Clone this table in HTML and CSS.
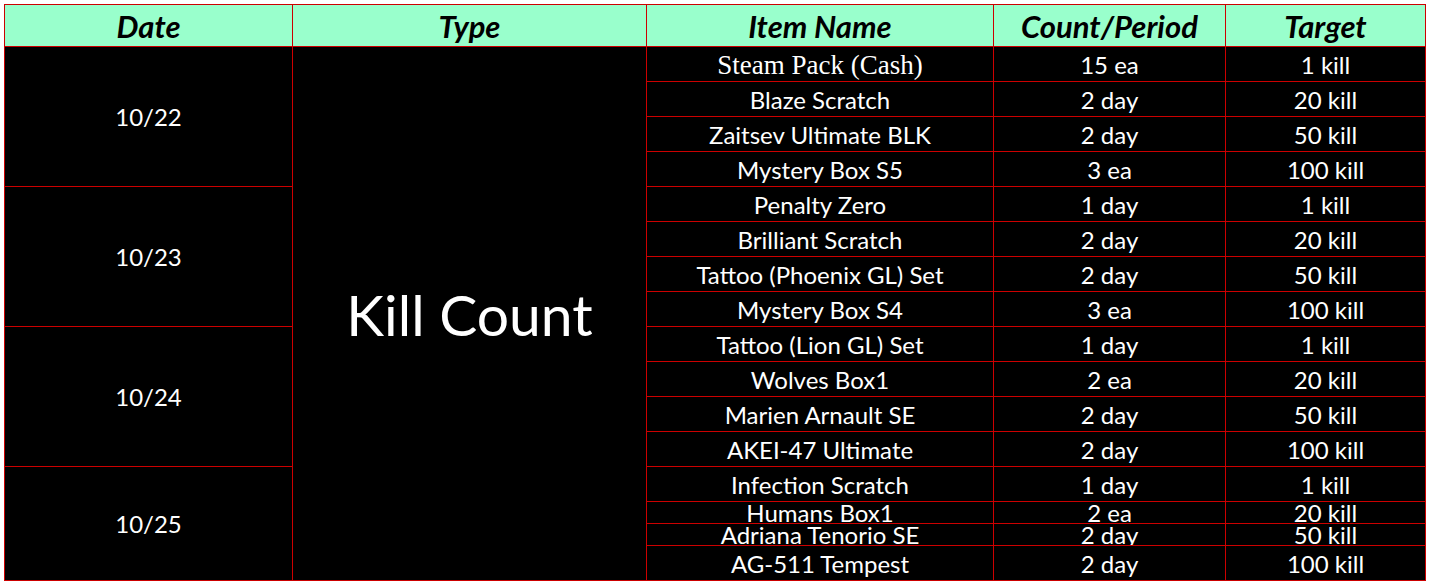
FILE: index.html
```html
<!DOCTYPE html>
<html>
<head>
<meta charset="utf-8">
<link rel="stylesheet" href="styles.css">
</head>
<body>
<div class="sheet">
  <div class="hd">Date</div>
  <div class="hd">Type</div>
  <div class="hd">Item Name</div>
  <div class="hd">Count/Period</div>
  <div class="hd">Target</div>

  <div class="c date span4">10/22</div>
  <div class="c type">Kill Count</div>
  <div class="c serif">Steam Pack (Cash)</div><div class="c">15 ea</div><div class="c">1 kill</div>
  <div class="c">Blaze Scratch</div><div class="c">2 day</div><div class="c">20 kill</div>
  <div class="c">Zaitsev Ultimate BLK</div><div class="c">2 day</div><div class="c">50 kill</div>
  <div class="c">Mystery Box S5</div><div class="c">3 ea</div><div class="c">100 kill</div>

  <div class="c date span4">10/23</div>
  <div class="c">Penalty Zero</div><div class="c">1 day</div><div class="c">1 kill</div>
  <div class="c">Brilliant Scratch</div><div class="c">2 day</div><div class="c">20 kill</div>
  <div class="c">Tattoo (Phoenix GL) Set</div><div class="c">2 day</div><div class="c">50 kill</div>
  <div class="c">Mystery Box S4</div><div class="c">3 ea</div><div class="c">100 kill</div>

  <div class="c date span4">10/24</div>
  <div class="c">Tattoo (Lion GL) Set</div><div class="c">1 day</div><div class="c">1 kill</div>
  <div class="c">Wolves Box1</div><div class="c">2 ea</div><div class="c">20 kill</div>
  <div class="c">Marien Arnault SE</div><div class="c">2 day</div><div class="c">50 kill</div>
  <div class="c">AKEI-47 Ultimate</div><div class="c">2 day</div><div class="c">100 kill</div>

  <div class="c date span4">10/25</div>
  <div class="c">Infection Scratch</div><div class="c">1 day</div><div class="c">1 kill</div>
  <div class="c tight">Humans Box1</div><div class="c tight">2 ea</div><div class="c tight">20 kill</div>
  <div class="c tight">Adriana Tenorio SE</div><div class="c tight">2 day</div><div class="c tight">50 kill</div>
  <div class="c">AG-511 Tempest</div><div class="c">2 day</div><div class="c">100 kill</div>
</div>
</body>
</html>
```
FILE: styles.css
```css
html, body {
  margin: 0;
  background: #ffffff;
}
body {
  padding: 4px;
}
.sheet {
  display: grid;
  grid-template-columns: 287px 353px 346px 231px 199px;
  grid-template-rows: 41px repeat(12, 34px) 34px 21px 21px 34px;
  gap: 1px;
  padding: 1px;
  background: #cc0000;
  width: max-content;
  font-family: Lato, "Noto Sans", sans-serif;
}
.hd {
  background: #99ffcc;
  color: #000;
  font-weight: 700;
  font-style: italic;
  font-size: 31px;
  display: flex;
  align-items: center;
  justify-content: center;
  overflow: hidden;
}
.c {
  background: #000;
  color: #fff;
  font-size: 24px;
  display: flex;
  align-items: center;
  justify-content: center;
  overflow: hidden;
  white-space: nowrap;
  line-height: 30px;
  padding-top: 2px;
}
.tight {
  padding-top: 0;
  line-height: 22px;
}
.serif {
  font-family: "Liberation Serif", serif;
  font-size: 27px;
}
.span4 {
  grid-row: span 4;
}
.date {
  padding-top: 0;
}
.type {
  grid-row: span 16;
  font-size: 57px;
  line-height: 60px;
  padding-top: 0;
}
```
